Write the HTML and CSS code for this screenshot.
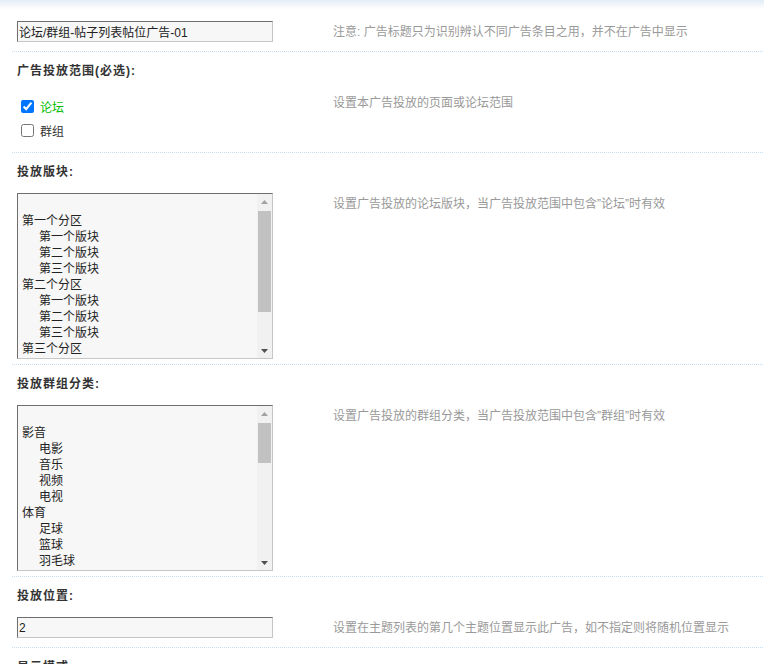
FILE: index.html
```html
<!DOCTYPE html>
<html lang="zh-CN">
<head>
<meta charset="utf-8">
<title>广告设置</title>
<link rel="stylesheet" href="styles.css">
</head>
<body>
<div class="page">
  <div class="row value">
    <div class="ctrl"><input class="text" type="text" value="论坛/群组-帖子列表帖位广告-01"></div>
    <div class="tip">注意: 广告标题只为识别辨认不同广告条目之用，并不在广告中显示</div>
  </div>

  <div class="row head">广告投放范围(必选):</div>
  <div class="row value checks">
    <div class="ctrl">
      <label class="check on"><input type="checkbox" checked> 论坛</label>
      <label class="check"><input type="checkbox"> 群组</label>
    </div>
    <div class="tip">设置本广告投放的页面或论坛范围</div>
  </div>

  <div class="row head">投放版块:</div>
  <div class="row value list-b">
    <div class="ctrl">
      <div class="listbox">
        <div class="opts">
          <div class="opt">&nbsp;</div>
          <div class="opt">第一个分区</div>
          <div class="opt sub">第一个版块</div>
          <div class="opt sub">第二个版块</div>
          <div class="opt sub">第三个版块</div>
          <div class="opt">第二个分区</div>
          <div class="opt sub">第一个版块</div>
          <div class="opt sub">第二个版块</div>
          <div class="opt sub">第三个版块</div>
          <div class="opt">第三个分区</div>
          <div class="opt sub">第一个版块</div>
          <div class="opt sub">第二个版块</div>
          <div class="opt sub">第三个版块</div>
        </div>
        <div class="sbar">
          <div class="sbtn"><svg width="7" height="4" viewBox="0 0 7 4"><path d="M3.5 0 L7 4 L0 4 Z" fill="#a3a3a3"/></svg></div>
          <div class="strack"><div class="thumb thumb-b"></div></div>
          <div class="sbtn"><svg width="7" height="4" viewBox="0 0 7 4"><path d="M0 0 L7 0 L3.5 4 Z" fill="#505050"/></svg></div>
        </div>
      </div>
    </div>
    <div class="tip">设置广告投放的论坛版块，当广告投放范围中包含”论坛”时有效</div>
  </div>

  <div class="row head">投放群组分类:</div>
  <div class="row value list-c">
    <div class="ctrl">
      <div class="listbox">
        <div class="opts">
          <div class="opt">&nbsp;</div>
          <div class="opt">影音</div>
          <div class="opt sub">电影</div>
          <div class="opt sub">音乐</div>
          <div class="opt sub">视频</div>
          <div class="opt sub">电视</div>
          <div class="opt">体育</div>
          <div class="opt sub">足球</div>
          <div class="opt sub">篮球</div>
          <div class="opt sub">羽毛球</div>
          <div class="opt sub">乒乓球</div>
          <div class="opt sub">网球</div>
          <div class="opt">生活</div>
          <div class="opt sub">美食</div>
          <div class="opt sub">旅游</div>
          <div class="opt sub">购物</div>
          <div class="opt">科技</div>
          <div class="opt sub">数码</div>
          <div class="opt sub">手机</div>
          <div class="opt sub">电脑</div>
        </div>
        <div class="sbar">
          <div class="sbtn"><svg width="7" height="4" viewBox="0 0 7 4"><path d="M3.5 0 L7 4 L0 4 Z" fill="#a3a3a3"/></svg></div>
          <div class="strack"><div class="thumb thumb-c"></div></div>
          <div class="sbtn"><svg width="7" height="4" viewBox="0 0 7 4"><path d="M0 0 L7 0 L3.5 4 Z" fill="#505050"/></svg></div>
        </div>
      </div>
    </div>
    <div class="tip">设置广告投放的群组分类，当广告投放范围中包含”群组”时有效</div>
  </div>

  <div class="row head">投放位置:</div>
  <div class="row value">
    <div class="ctrl"><input class="text" type="text" value="2"></div>
    <div class="tip">设置在主题列表的第几个主题位置显示此广告，如不指定则将随机位置显示</div>
  </div>

  <div class="row head">显示模式:</div>
</div>
</body>
</html>
```

FILE: styles.css
```css
html, body {
  margin: 0;
  padding: 0;
}

body {
  background: #fff linear-gradient(to bottom, #e2ebf6 0px, #f3f7fb 5px, #ffffff 10px) no-repeat;
  font-family: "Liberation Sans", "Noto Sans CJK SC", sans-serif;
  font-size: 12px;
  color: #333;
  height: 664px;
  overflow: hidden;
}

.page {
  padding: 21px 0 0 12px;
}

.row {
  display: flex;
}

.head {
  background: linear-gradient(to right, #c4dff3 1px, transparent 1px) repeat-x 0 0 / 2px 1px;
  padding: 12px 5px 13px;
  line-height: 16px;
  font-weight: bold;
  letter-spacing: 1px;
  color: #333;
}

.value {
  padding: 0 5px 9px;
  align-items: flex-start;
}

.value.checks {
  padding: 0 5px 10px;
}

.value.list-b {
  padding: 0 5px 5px;
}

.value.list-c {
  padding: 0 5px 5px;
}

.ctrl {
  width: 316px;
  flex: none;
}

.tip {
  padding-top: 3px;
  line-height: 16px;
  color: #999;
  white-space: nowrap;
}

.checks .ctrl {
  padding-top: 2px;
}

.text {
  display: block;
  box-sizing: border-box;
  width: 256px;
  height: 21px;
  margin: 0;
  padding: 0 1px;
  border: 1px solid;
  border-color: #6e6e6e #c6c6c6 #c6c6c6 #6e6e6e;
  background: #f7f7f7;
  font-family: "Liberation Sans", "Noto Sans CJK SC", sans-serif;
  font-size: 12px;
  color: #222;
  outline: none;
}

.check {
  display: flex;
  align-items: center;
  height: 24px;
  color: #333;
}

.check input {
  width: 13px;
  height: 13px;
  margin: 0 6px 0 4px;
}

.check.on {
  color: #00c000;
}

.listbox {
  display: flex;
  box-sizing: border-box;
  width: 256px;
  height: 166px;
  border: 1px solid;
  border-color: #6e6e6e #c6c6c6 #c6c6c6 #6e6e6e;
  background: #f7f7f7;
  color: #222;
}

.opts {
  flex: 1;
  overflow: hidden;
  padding-top: 3px;
}

.opt {
  height: 16px;
  line-height: 16px;
  padding-left: 4px;
  white-space: nowrap;
}

.opt.sub {
  padding-left: 21px;
}

.sbar {
  width: 15px;
  flex: none;
  display: flex;
  flex-direction: column;
  background: #f1f1f1;
}

.sbtn {
  height: 15px;
  flex: none;
  display: flex;
  align-items: center;
  justify-content: center;
}

.strack {
  flex: 1;
  padding: 2px 1px;
}

.thumb {
  background: #c1c1c1;
}

.thumb-b {
  height: 101px;
}

.thumb-c {
  height: 40px;
}
```
